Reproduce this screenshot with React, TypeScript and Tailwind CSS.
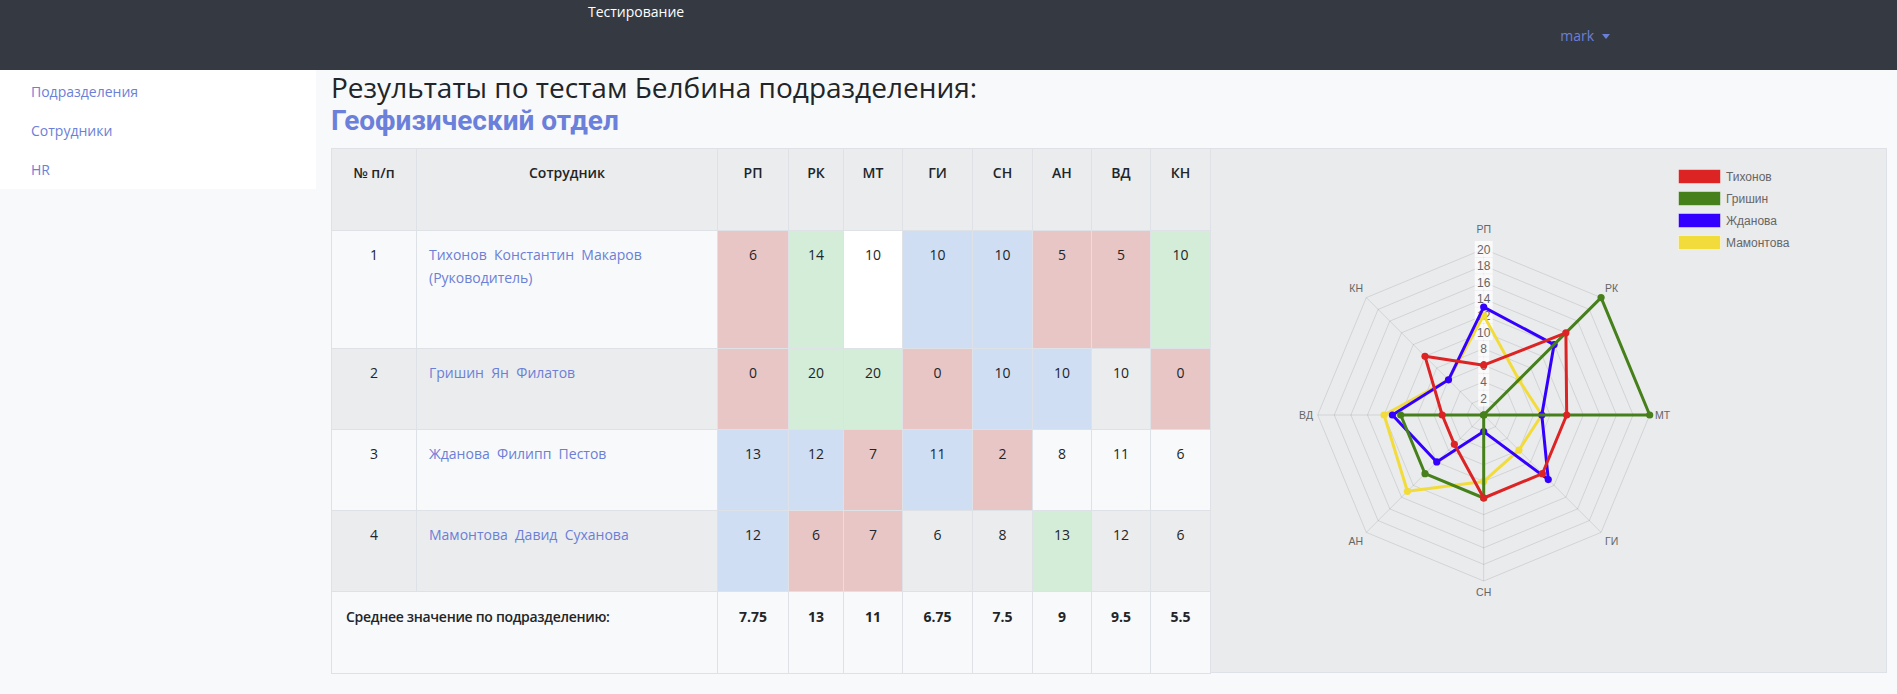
import React from 'react';

type Tone = 'r' | 'g' | 'b' | 'w' | '';

const toneClass: Record<Tone, string> = {
  r: 'bg-[#e8c6c6]',
  g: 'bg-[#d3edd8]',
  b: 'bg-[#cfdef3]',
  w: 'bg-white',
  '': '',
};

const heads = ['РП', 'РК', 'МТ', 'ГИ', 'СН', 'АН', 'ВД', 'КН'];
const colW = ['w-[85px]', 'w-[301px]', 'w-[71px]', 'w-[55px]', 'w-[59px]', 'w-[70px]', 'w-[60px]', 'w-[59px]', 'w-[59px]', 'w-[60px]'];

const rows: { n: number; name: string; sub?: string; h: string; bg: string; vals: [number, Tone][] }[] = [
  {
    n: 1,
    name: 'Тихонов\u00a0 Константин\u00a0 Макаров',
    sub: '(Руководитель)',
    h: 'h-[118px]',
    bg: 'bg-[#f8f9fa]',
    vals: [[6, 'r'], [14, 'g'], [10, 'w'], [10, 'b'], [10, 'b'], [5, 'r'], [5, 'r'], [10, 'g']],
  },
  {
    n: 2,
    name: 'Гришин\u00a0 Ян\u00a0 Филатов',
    h: 'h-[81px]',
    bg: 'bg-[#ebeced]',
    vals: [[0, 'r'], [20, 'g'], [20, 'g'], [0, 'r'], [10, 'b'], [10, 'b'], [10, ''], [0, 'r']],
  },
  {
    n: 3,
    name: 'Жданова\u00a0 Филипп\u00a0 Пестов',
    h: 'h-[81px]',
    bg: 'bg-[#f8f9fa]',
    vals: [[13, 'b'], [12, 'b'], [7, 'r'], [11, 'b'], [2, 'r'], [8, ''], [11, ''], [6, '']],
  },
  {
    n: 4,
    name: 'Мамонтова\u00a0 Давид\u00a0 Суханова',
    h: 'h-[81px]',
    bg: 'bg-[#ebeced]',
    vals: [[12, 'b'], [6, 'r'], [7, 'r'], [6, ''], [8, ''], [13, 'g'], [12, ''], [6, '']],
  },
];

const averages = ['7.75', '13', '11', '6.75', '7.5', '9', '9.5', '5.5'];

// radar data, same order as heads
const series = [
  { name: 'Тихонов', color: '#dc2424', vals: [6, 14, 10, 10, 10, 5, 5, 10] },
  { name: 'Гришин', color: '#46801b', vals: [0, 20, 20, 0, 10, 10, 10, 0] },
  { name: 'Жданова', color: '#3300ff', vals: [13, 12, 7, 11, 2, 8, 11, 6] },
  { name: 'Мамонтова', color: '#f2dc3c', vals: [12, 6, 7, 6, 8, 13, 12, 6] },
];

const CX = 272.7;
const CY = 266;
const R = 166;

const pt = (i: number, v: number) => {
  const a = -Math.PI / 2 + (i * Math.PI) / 4;
  const r = (v / 20) * R;
  return [CX + Math.cos(a) * r, CY + Math.sin(a) * r];
};

const ring = (v: number) =>
  heads.map((_, i) => pt(i, v).map((n) => n.toFixed(1)).join(',')).join(' ');

const pointLabels: { t: string; x: number; y: number; anchor: 'start' | 'middle' | 'end' }[] = [
  { t: 'РП', x: CX, y: 84, anchor: 'middle' },
  { t: 'РК', x: 394, y: 143, anchor: 'start' },
  { t: 'МТ', x: 444, y: 270, anchor: 'start' },
  { t: 'ГИ', x: 394, y: 396, anchor: 'start' },
  { t: 'СН', x: CX, y: 447, anchor: 'middle' },
  { t: 'АН', x: 152, y: 396, anchor: 'end' },
  { t: 'ВД', x: 102, y: 270, anchor: 'end' },
  { t: 'КН', x: 152, y: 143, anchor: 'end' },
];

function RadarChart() {
  const ticks = [2, 4, 6, 8, 10, 12, 14, 16, 18, 20];
  return (
    <svg width="676" height="525" viewBox="0 0 676 525" className="block" fontFamily="'Liberation Sans', Arial, sans-serif">
      {/* grid */}
      {ticks.map((v) => (
        <polygon key={v} points={ring(v)} fill="none" stroke="rgba(0,0,0,0.1)" strokeWidth="1" />
      ))}
      {heads.map((_, i) => {
        const [x, y] = pt(i, 20);
        return <line key={i} x1={CX} y1={CY} x2={x} y2={y} stroke="rgba(0,0,0,0.1)" strokeWidth="1" />;
      })}
      {/* tick labels */}
      {ticks.map((v) => {
        const y = CY - (v / 20) * R;
        const w = v < 10 ? 11 : 18;
        return (
          <g key={v}>
            <rect x={CX - w / 2} y={y - 8} width={w} height={16} fill="rgba(255,255,255,0.75)" />
            <text x={CX} y={y + 4.5} textAnchor="middle" fontSize="12" fill="#666">
              {v}
            </text>
          </g>
        );
      })}
      {pointLabels.map((l) => (
        <text key={l.t} x={l.x} y={l.y} textAnchor={l.anchor} fontSize="10.5" fill="#666">
          {l.t}
        </text>
      ))}
      {/* datasets, first one on top */}
      {[...series].reverse().map((s) => {
        const pts = s.vals.map((v, i) => pt(i, v));
        return (
          <g key={s.name}>
            <polygon
              points={pts.map((p) => p.map((n) => n.toFixed(1)).join(',')).join(' ')}
              fill="none"
              stroke={s.color}
              strokeWidth="3"
              strokeLinejoin="round"
            />
            {pts.map((p, i) => (
              <circle key={i} cx={p[0]} cy={p[1]} r="3.6" fill={s.color} />
            ))}
          </g>
        );
      })}
      {/* legend */}
      {series.map((s, i) => (
        <g key={s.name}>
          <rect x={467.5} y={20.5 + i * 22} width={42} height={14} fill={s.color} stroke="rgba(255,255,255,0.45)" strokeWidth="1" />
          <text x={515} y={32 + i * 22} fontSize="12" fill="#666">
            {s.name}
          </text>
        </g>
      ))}
    </svg>
  );
}

export default function App() {
  return (
    <div className="min-h-screen bg-[#f8f9fa] font-['Open_Sans',sans-serif] text-[#212529]">
      <header className="h-[70px] bg-[#353a42] flex items-start">
        <div className="ml-[588px] mt-[1px] text-[14px] leading-[22px] text-white">Тестирование</div>
        <div className="ml-auto mr-[287px] mt-[25px] flex items-center text-[14px] leading-[22px] text-[#6b7fd7]">
          mark
          <span className="ml-[8px] w-0 h-0 border-l-[4px] border-r-[4px] border-t-[5px] border-l-transparent border-r-transparent border-t-[#6b7fd7]" />
        </div>
      </header>

      <div className="flex items-start">
        <nav className="w-[316px] bg-white pt-[1.5px] pb-[0.5px] text-[14px] text-[#6b7fd7]">
          {['Подразделения', 'Сотрудники', 'HR'].map((item) => (
            <div key={item} className="h-[39px] flex items-center pl-[31px]">
              {item}
            </div>
          ))}
        </nav>

        <main className="ml-[15px]">
          <div className="mb-[10px]">
            <h2 className="text-[28px] leading-[34px] text-[#212529]">Результаты по тестам Белбина подразделения:</h2>
            <h2 className="font-['Roboto',sans-serif] text-[28px] leading-[34px] font-bold text-[#6a80da]">
              Геофизический отдел
            </h2>
          </div>

          <div className="flex">
            <table className="table-fixed border-collapse text-[14px] leading-[23px]">
              <colgroup>
                {colW.map((w, i) => (
                  <col key={i} className={w} />
                ))}
              </colgroup>
              <tbody>
                <tr className="bg-[#ebeced]">
                  <th className="h-[82px] border border-[#dee2e6] align-top pt-[12px] text-center font-semibold">№ п/п</th>
                  <th className="border border-[#dee2e6] align-top pt-[12px] text-center font-semibold">Сотрудник</th>
                  {heads.map((h) => (
                    <th key={h} className="border border-[#dee2e6] align-top pt-[12px] text-center font-semibold">
                      {h}
                    </th>
                  ))}
                </tr>
                {rows.map((r) => (
                  <tr key={r.n} className={r.bg}>
                    <td className={`${r.h} border border-[#dee2e6] align-top pt-[12px] text-center`}>{r.n}</td>
                    <td className="border border-[#dee2e6] align-top pt-[12px] px-[12px] text-[#6b7fd7]">
                      <div>{r.name}</div>
                      {r.sub && <div>{r.sub}</div>}
                    </td>
                    {r.vals.map(([v, t], i) => (
                      <td key={i} className={`border border-[#dee2e6] align-top pt-[12px] text-center ${toneClass[t]}`}>
                        {v}
                      </td>
                    ))}
                  </tr>
                ))}
                <tr className="bg-[#f8f9fa]">
                  <td
                    colSpan={2}
                    className="h-[82px] border border-[#dee2e6] align-top pt-[13px] px-[14px] font-semibold tracking-[-0.3px]"
                  >
                    Среднее значение по подразделению:
                  </td>
                  {averages.map((a, i) => (
                    <td key={i} className="border border-[#dee2e6] align-top pt-[13px] text-center font-bold">
                      {a}
                    </td>
                  ))}
                </tr>
              </tbody>
            </table>

            <div className="w-[676px] h-[525px] bg-[#eaebed] border border-l-0 border-[#dee2e6]">
              <RadarChart />
            </div>
          </div>
        </main>
      </div>
    </div>
  );
}
